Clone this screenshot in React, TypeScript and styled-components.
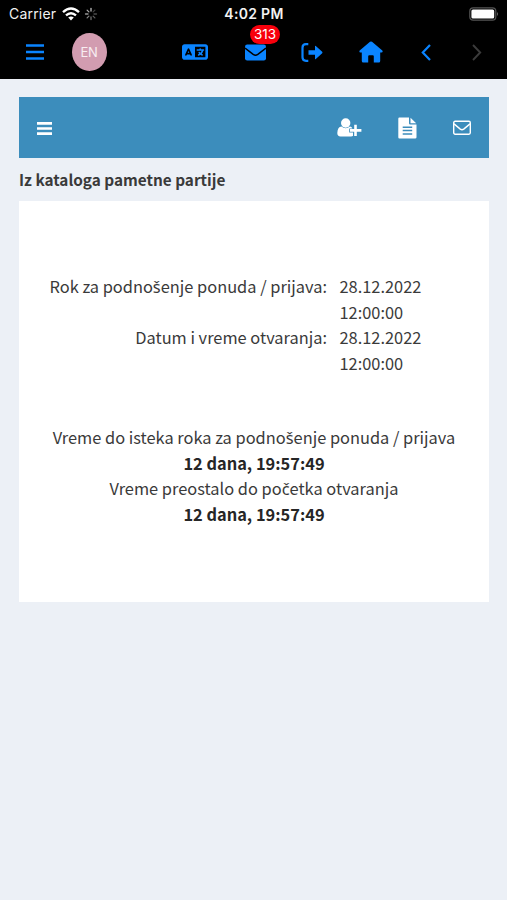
import React from "react";
import styled, { createGlobalStyle } from "styled-components";
import { FaLanguage } from "react-icons/fa6";

const GlobalStyle = createGlobalStyle`
  * { box-sizing: border-box; }
  body { margin: 0; background: #ecf0f6; }
`;

const Screen = styled.div`
  width: 507px;
  height: 900px;
  overflow: hidden;
  background: #ecf0f6;
  color: #3a3a3a;
  font-family: "Noto Sans CJK SC", "Noto Sans", sans-serif;
`;

const TopArea = styled.header`
  height: 79px;
  background: #000;
  font-family: Inter, "Liberation Sans", sans-serif;
`;

const StatusBar = styled.div`
  height: 27px;
  padding: 0 8px 0 9px;
  display: grid;
  grid-template-columns: 1fr auto 1fr;
  align-items: center;
  color: #f2f2f2;
`;

const Carrier = styled.div`
  display: flex;
  align-items: center;
  font-size: 14px;
  letter-spacing: 0.2px;
  svg { display: block; }
`;

const Wifi = styled.svg`margin-left: 6px;`;
const Spinner = styled.svg`margin-left: 4px;`;

const Clock = styled.div`
  font-size: 14px;
  font-weight: 600;
  letter-spacing: 0.3px;
`;

const Battery = styled.svg`
  display: block;
  justify-self: end;
`;

const NavBar = styled.nav`
  height: 52px;
  display: grid;
  grid-template-columns: 69px 40px 52px 67px 54px 60px 58px 51px 51px 5px;
  align-items: center;
  padding-bottom: 2px;
`;

const NavItem = styled.div<{ $dim?: boolean }>`
  position: relative;
  display: flex;
  justify-content: center;
  color: ${(p) => (p.$dim ? "#3b3b3b" : "#0a84ff")};
  svg { display: block; }
`;

const Avatar = styled.div`
  flex: none;
  width: 35px;
  height: 38px;
  border-radius: 50%;
  background: #d29cb0;
  color: #f8eef2;
  font-size: 13px;
  letter-spacing: -0.3px;
  display: flex;
  align-items: center;
  justify-content: center;
`;

const Badge = styled.span`
  position: absolute;
  top: -19px;
  left: 22px;
  width: 30px;
  height: 19px;
  border-radius: 10px;
  background: #f8000c;
  color: #fff;
  font-size: 13.5px;
  line-height: 19px;
  text-align: center;
`;

const Content = styled.main`
  padding: 18px 18px 0 19px;
`;

const Toolbar = styled.div`
  height: 61px;
  background: #3c8dbc;
  color: #fff;
  display: flex;
  align-items: center;
  padding: 0 18px;
  svg { display: block; }
`;

const ToolGroup = styled.div`
  margin-left: auto;
  display: flex;
  align-items: center;
  gap: 36px;
`;

const Title = styled.h1`
  margin: 0;
  height: 43px;
  font-size: 15.35px;
  line-height: 43px;
  font-weight: 700;
  white-space: nowrap;
`;

const Panel = styled.section`
  height: 401px;
  background: #fff;
  padding-top: 73px;
  font-size: 16.4px;
  line-height: 25.7px;
`;

const Deadlines = styled.dl`
  margin: 0 0 48px;
  display: grid;
  grid-template-columns: 308px 100px;
  column-gap: 12.5px;
`;

const Term = styled.dt`
  text-align: right;
  white-space: nowrap;
`;

const Value = styled.dd`margin: 0;`;

const Countdown = styled.div`
  text-align: center;
  white-space: nowrap;
`;

const Remaining = styled.div`
  font-weight: 700;
  color: #262626;
`;

/* The CJK family has no precomposed caron letters. */
const Caron = styled.span`
  font-family: "Noto Sans", sans-serif;
  font-size: 16.4px;
  line-height: 1;
`;

const rays = [1, 0.35, 0.4, 0.5, 0.6, 0.7, 0.8, 0.9];

export default function App() {
  return (
    <Screen>
      <GlobalStyle />
      <TopArea>
        <StatusBar>
          <Carrier>
            Carrier
            <Wifi width="18" height="14" viewBox="0 0 18 14" fill="none" stroke="#fff" strokeWidth="2.4">
              <path d="M1 5.2Q9-2 17 5.2M4 8.4Q9 4 14 8.4" />
              <path d="M6.2 10.6Q9 8.3 11.8 10.6L9 13.4Z" fill="#fff" stroke="none" />
            </Wifi>
            <Spinner width="14" height="14" viewBox="-7 -7 14 14" stroke="#bbb" strokeWidth="1.3" strokeLinecap="round">
              {rays.map((o, i) => (
                <path key={i} d="M0-3V-5.5" opacity={o} transform={`rotate(${i * 45})`} />
              ))}
            </Spinner>
          </Carrier>
          <Clock>4:02 PM</Clock>
          <Battery width="30" height="14" viewBox="0 0 30 14">
            <rect x="0.8" y="0.8" width="26" height="12.4" rx="3.4" fill="none" stroke="#555" strokeWidth="1.2" />
            <rect x="2.4" y="2.4" width="22.8" height="9.2" rx="1.6" fill="#fff" />
            <path d="M28 5Q30 7 28 9Z" fill="#666" />
          </Battery>
        </StatusBar>
        <NavBar>
          <NavItem>
            <svg width="18" height="18" viewBox="0 0 18 18" stroke="currentColor" strokeWidth="2.3">
              <path d="M0 2.5H18M0 9H18M0 15.5H18" />
            </svg>
          </NavItem>
          <NavItem><Avatar>EN</Avatar></NavItem>
          <span />
          <NavItem><FaLanguage size={26} /></NavItem>
          <NavItem>
            <svg width="21" height="17" viewBox="0 0 21 17">
              <rect x="0" y="0.5" width="21" height="16" rx="2.2" fill="currentColor" />
              <path d="M0 4.1L8.2 10.4Q10.5 12 12.8 10.4L21 4.1" fill="none" stroke="#000" strokeWidth="1.5" />
            </svg>
            <Badge>313</Badge>
          </NavItem>
          <NavItem>
            <svg width="22" height="19" viewBox="0 0 22 19">
              <path d="M7.3 1.2H5Q1.5 1.2 1.5 4.7V14.3Q1.5 17.8 5 17.8H7.3" fill="none" stroke="currentColor" strokeWidth="2.2" />
              <path d="M7.5 7.2H14V3.3Q14 2.3 14.8 3L21.2 8.8Q21.8 9.5 21.2 10.2L14.8 16Q14 16.7 14 15.7V11.8H7.5Z" fill="currentColor" />
            </svg>
          </NavItem>
          <NavItem>
            <svg width="24" height="22" viewBox="0 0 24 22" fill="currentColor">
              <path d="M11 0.8Q12 0 13 0.8L23.3 9.5Q24.3 11.3 22.5 11.6H21.2V20Q21.2 21.5 19.7 21.5H14.8V15.2Q14.8 14.3 13.8 14.3H10.2Q9.2 14.3 9.2 15.2V21.5H4.3Q2.8 21.5 2.8 20V11.6H1.5Q-0.3 11.3 0.7 9.5Z" />
            </svg>
          </NavItem>
          <NavItem>
            <svg width="10" height="17" viewBox="0 0 10 17" fill="none" stroke="currentColor" strokeWidth="2.2">
              <path d="M9 1L1.8 8.5L9 16" />
            </svg>
          </NavItem>
          <NavItem $dim>
            <svg width="10" height="17" viewBox="0 0 10 17" fill="none" stroke="currentColor" strokeWidth="1.9">
              <path d="M1 1L8.2 8.5L1 16" />
            </svg>
          </NavItem>
        </NavBar>
      </TopArea>
      <Content>
        <Toolbar>
          <svg width="15" height="14" viewBox="0 0 15 14" stroke="currentColor" strokeWidth="2.6">
            <path d="M0 2.4H15M0 7.5H15M0 12.6H15" />
          </svg>
          <ToolGroup>
            <svg width="25" height="19" viewBox="0 0 25 19" fill="currentColor">
              <circle cx="8.7" cy="5" r="4.7" />
              <path d="M4.4 8.6Q8.7 12 13 8.6Q14.6 8.8 15.4 10.4H12.2V14.5H16V17.8Q15.5 18.4 14 18.4H3.5Q0.3 18.4 0.3 15Q0.6 8.8 4.4 8.6Z" />
              <path d="M17.2 6.8H19.8V11H24.4V13.8H19.8V18H17.2V13.8H13V11H17.2Z" />
            </svg>
            <svg width="19" height="22" viewBox="0 0 19 22">
              <path d="M1.4 0.5H11V6.2Q11 7.5 12.3 7.5H18.5V20.2Q18.5 21.5 17.2 21.5H1.4Q0.3 21.5 0.3 20.2V1.7Q0.3 0.5 1.4 0.5Z" fill="currentColor" />
              <path d="M12.5 0.8L18.2 6.2H12.5Z" fill="currentColor" />
              <path d="M4.7 10.3H14.2M4.7 13.6H14.2M4.7 16.9H14.2" stroke="#3c8dbc" strokeWidth="1.5" />
            </svg>
            <svg width="18" height="15" viewBox="0 0 18 15" fill="none" stroke="currentColor" strokeWidth="1.4">
              <rect x="0.7" y="1.3" width="16.6" height="12.9" rx="1.4" />
              <path d="M1 3.9L7.3 9.1Q9 10.4 10.7 9.1L17 3.9" />
            </svg>
          </ToolGroup>
        </Toolbar>
        <Title>Iz kataloga pametne partije</Title>
        <Panel>
          <Deadlines>
            <Term>Rok za podno<Caron>š</Caron>enje ponuda / prijava:</Term>
            <Value>28.12.2022 12:00:00</Value>
            <Term>Datum i vreme otvaranja:</Term>
            <Value>28.12.2022 12:00:00</Value>
          </Deadlines>
          <Countdown>
            <div>Vreme do isteka roka za podno<Caron>š</Caron>enje ponuda / prijava</div>
            <Remaining>12 dana, 19:57:49</Remaining>
            <div>Vreme preostalo do po<Caron>č</Caron>etka otvaranja</div>
            <Remaining>12 dana, 19:57:49</Remaining>
          </Countdown>
        </Panel>
      </Content>
    </Screen>
  );
}
